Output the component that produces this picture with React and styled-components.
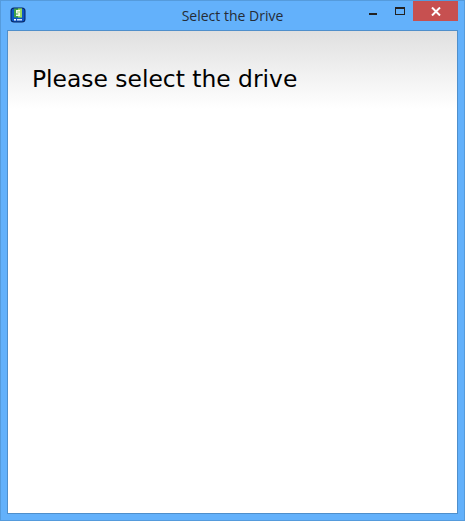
import React from 'react'
import styled, { createGlobalStyle } from 'styled-components'

const GlobalStyle = createGlobalStyle`
    html, body {
        margin: 0;
        padding: 0;
    }
    body {
        width: 465px;
        height: 521px;
        overflow: hidden;
    }
`

const Window = styled.div`
    box-sizing: border-box;
    width: 465px;
    height: 521px;
    display: flex;
    flex-direction: column;
    background: #63b1fb;
    border: 1px solid #559bdc;
`

const TitleBar = styled.div`
    height: 28px;
    flex: none;
    display: grid;
    grid-template-columns: 1fr auto 1fr;
    align-items: start;
`

const AppIcon = styled.svg`
    display: block;
    width: 16px;
    height: 16px;
    margin: 6px 0 0 9px;
`

const Title = styled.div`
    font-family: 'Open Sans', 'Liberation Sans', sans-serif;
    font-size: 14px;
    line-height: 30px;
    color: #252c36;
    white-space: nowrap;
`

const Controls = styled.div`
    display: flex;
    justify-content: flex-end;
    align-items: flex-start;
    margin-right: 6px;
`

const ControlButton = styled.div`
    display: flex;
    align-items: center;
    justify-content: center;
    height: 20px;
    width: ${(p) => p.$width}px;
    background: ${(p) => p.$bg || 'transparent'};
`

const MinimizeGlyph = styled.div`
    width: 8px;
    height: 2px;
    margin-top: 6px;
    background: #222;
`

const MaximizeGlyph = styled.div`
    box-sizing: border-box;
    width: 10px;
    height: 8px;
    border: 1px solid #222;
    border-top-width: 2px;
`

const Client = styled.div`
    flex: 1;
    margin: 1px 6px 6px;
    border: 1px solid #4f8fcb;
    background: #fff;
`

const Header = styled.div`
    box-sizing: border-box;
    height: 78px;
    padding: 32px 0 0 24px;
    background: linear-gradient(#e0e0e0, #ffffff);
`

const Heading = styled.h1`
    margin: 0;
    font-family: 'DejaVu Sans', Verdana, sans-serif;
    font-size: 23.4px;
    font-weight: 400;
    line-height: 32px;
    color: #000;
    white-space: nowrap;
`

const App = () => (
    <>
        <GlobalStyle />
        <Window>
            <TitleBar>
                <AppIcon viewBox="0 0 16 16">
                    <rect x="0.5" y="0.5" width="15" height="15" rx="3.5" fill="#06235f" />
                    <rect x="1.5" y="1.5" width="13" height="13" rx="2.5" fill="#0d55c4" />
                    <rect x="4" y="1.5" width="8" height="9" fill="#3f9f4a" />
                    <rect x="8" y="1.5" width="4" height="9" fill="#9ad85c" />
                    <path d="M6 3h4v1.4H7.5v1h2.5v3.6H6V7.6h2.5v-1H6z" fill="#f4fbe8" />
                    <rect x="4" y="12" width="2" height="1.5" fill="#ffffff" />
                    <rect x="7" y="12" width="5" height="1.5" fill="#cfe1f8" />
                </AppIcon>
                <Title>Select the Drive</Title>
                <Controls>
                    <ControlButton $width={28}>
                        <MinimizeGlyph />
                    </ControlButton>
                    <ControlButton $width={26}>
                        <MaximizeGlyph />
                    </ControlButton>
                    <ControlButton $width={45} $bg="#c75050">
                        <svg width="10" height="9" viewBox="0 0 10 9">
                            <path d="M1 0.5l8 8M9 0.5l-8 8" stroke="#fff" strokeWidth="2" fill="none" />
                        </svg>
                    </ControlButton>
                </Controls>
            </TitleBar>
            <Client>
                <Header>
                    <Heading>Please select the drive</Heading>
                </Header>
            </Client>
        </Window>
    </>
)

export default App
